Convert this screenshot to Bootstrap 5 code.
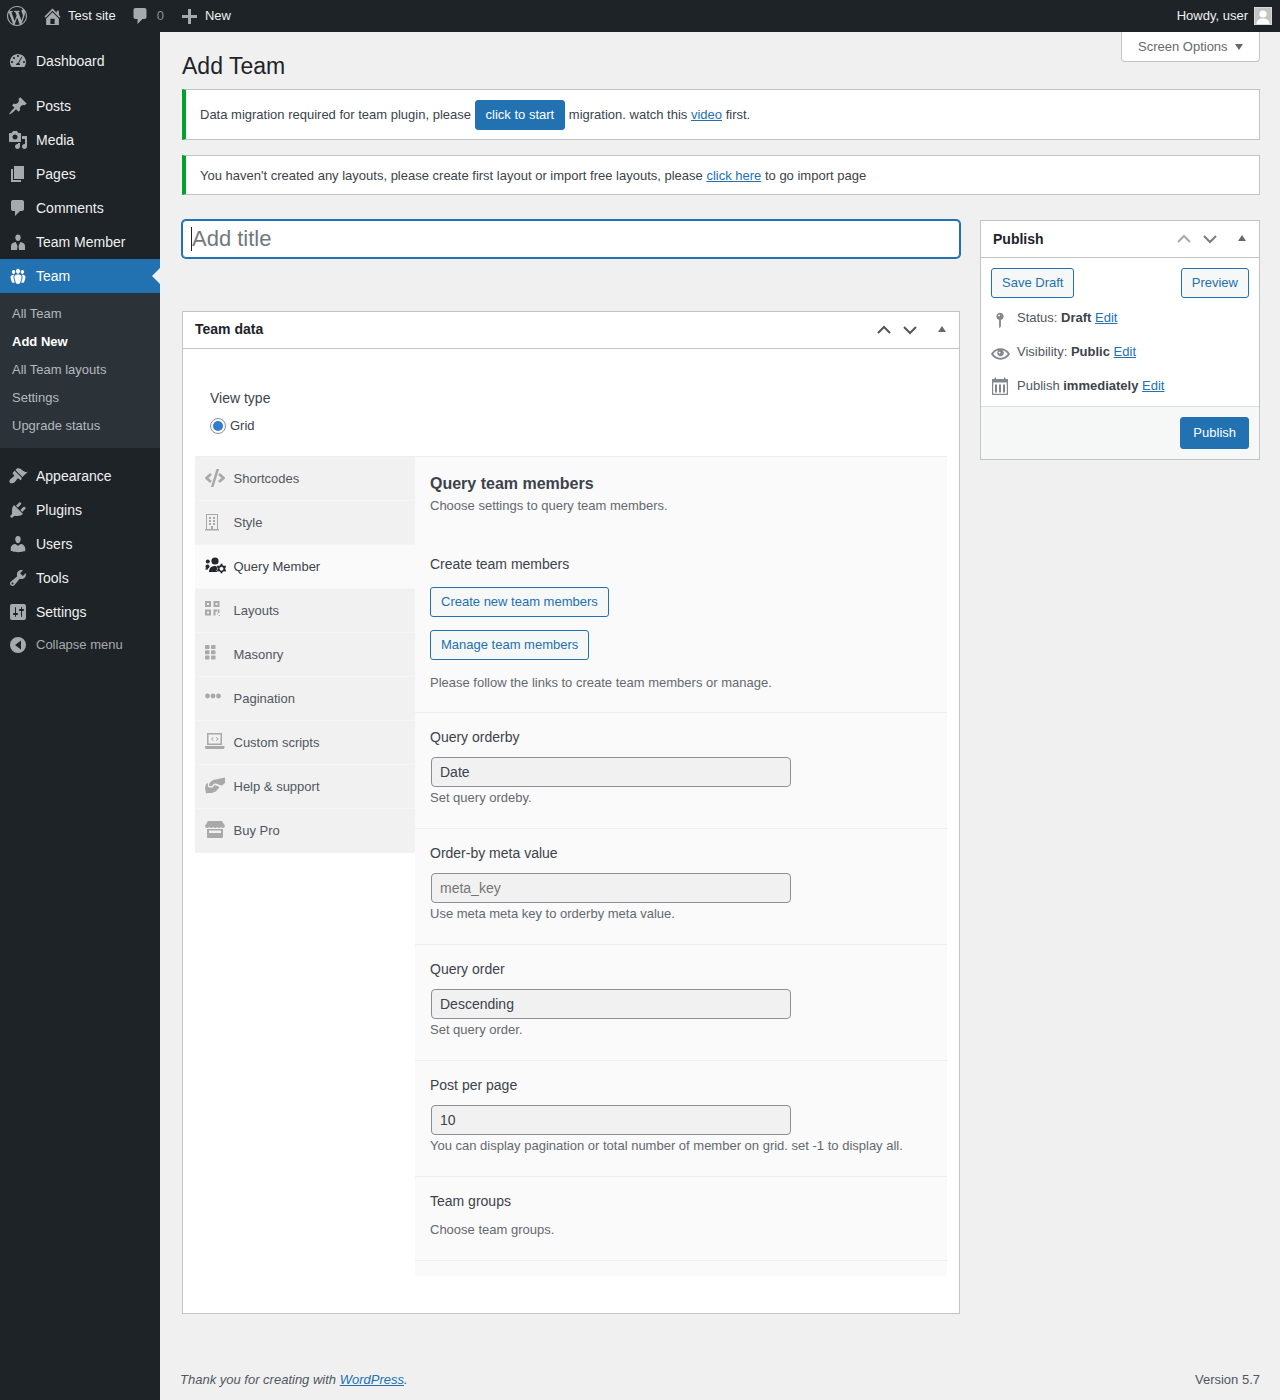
<!DOCTYPE html>
<html lang="en">
<head>
  <meta charset="UTF-8">
  <title>Add Team ‹ Test site — WordPress</title>
  <link href="https://cdn.jsdelivr.net/npm/bootstrap@5.3.0/dist/css/bootstrap.min.css" rel="stylesheet">
  <style>
    body {
      font-family: "Liberation Sans", Arial, sans-serif;
      font-size: 13px;
      line-height: 20px;
      background: #f0f0f1;
      color: #3c434a;
      min-height: 1400px;
    }
    a { color: #2271b1; }

    /* top bar */
    .admin-bar { height: 32px; background: #1d2327; color: #f0f0f1; }
    .bar-item { height: 32px; color: #f0f0f1; text-decoration: none; }
    .bar-item svg { fill: #a7aaad; display: block; }
    .bar-logo { margin: 0 16px 0 7px; width: 21px; }
    .bar-home { gap: 7px; margin-right: 16px; }
    .bar-comments { gap: 9px; margin-right: 18px; }
    .bar-new { gap: 8px; }
    .bar-count { color: #8b9096; }
    .bar-user { gap: 6px; margin-right: 8px; }
    .avatar-box { width: 18px; height: 18px; background: #c4c4c4; border: 1px solid #d8d8d8; overflow: hidden; }

    /* side menu */
    .side-menu { width: 160px; flex: 0 0 160px; background: #1d2327; padding-top: 12px; }
    .menu-row { height: 34px; padding-left: 8px; gap: 8px; color: #f0f0f1; font-size: 14px; text-decoration: none; position: relative; }
    .menu-row svg { width: 20px; height: 20px; fill: #a7aaad; flex: none; }
    .menu-gap { height: 11px; }
    .menu-row.is-current { background: #2271b1; color: #fff; }
    .menu-row.is-current svg { fill: #fff; }
    .menu-row.is-current::after {
      content: "";
      position: absolute;
      right: 0;
      top: 9px;
      border: 8px solid transparent;
      border-right-color: #f0f0f1;
      border-left-width: 0;
    }
    .sub-menu { background: #2c3338; padding: 7px 0 8px; }
    .sub-row { height: 28px; line-height: 28px; padding-left: 12px; color: #b4b9be; text-decoration: none; display: block; }
    .sub-row.is-current { color: #fff; font-weight: 700; }
    .collapse-row { height: 32px; font-size: 13px; color: #a7aaad; }

    /* page */
    .page-wrap { padding: 0 20px 0 22px; min-width: 0; }
    .screen-anchor { height: 0; }
    .screen-tab {
      width: 139px; height: 30px; padding-left: 16px; gap: 7px; background: #fff; color: #646970;
      border: 1px solid #c3c4c7; border-top: 0; border-radius: 0 0 4px 4px;
    }
    .tri-down { border: 4px solid transparent; border-top: 6px solid #646970; border-bottom: 0; width: 0; }
    .page-title { font-size: 23px; font-weight: 400; line-height: 30px; color: #1d2327; padding-top: 19px; margin: 0 0 8px; }

    .wp-notice {
      background: #fff;
      border: 1px solid #c3c4c7;
      border-left: 4px solid #00a32a;
      border-radius: 0;
      margin: 0 0 15px;
      padding: 10px 14px;
      color: #3c434a;
    }
    .notice-tall { height: 51px; }
    .notice-short { height: 40px; }
    .notice-short.wp-notice { margin-bottom: 25px; }

    .wp-btn {
      font-size: 13px;
      line-height: 28px;
      padding: 0 10px;
      border: 1px solid #2271b1;
      border-radius: 3px;
      background: #f6f7f7;
      color: #2271b1;
    }
    .wp-btn:hover { background: #f0f0f1; color: #135e96; border-color: #135e96; }
    .wp-btn-main { background: #2271b1; color: #fff; vertical-align: baseline; }
    .wp-btn-large { line-height: 30px; padding: 0 12px; }

    .main-col { width: 778px; flex: 0 0 778px; }
    .side-col { width: 280px; flex: 0 0 280px; }

    .title-box { height: 38px; margin-bottom: 53px; position: relative; }
    .title-input {
      height: 38px;
      font-size: 22px;
      padding: 0 9px;
      border: 1px solid #2271b1;
      border-radius: 4px;
      box-shadow: 0 0 0 1px #2271b1;
      background: #fff;
      font-family: inherit;
    }
    .title-input::placeholder { color: #73787d; opacity: 1; }
    .title-caret { position: absolute; left: 9px; top: 7px; width: 1px; height: 24px; background: #1d2327; }

    .meta-card { border: 1px solid #c3c4c7; border-radius: 0; background: #fff; }
    .meta-head {
      height: 37px; padding: 0 13px 0 12px; background: #fff; border-bottom: 1px solid #c3c4c7; border-radius: 0;
      font-size: 14px; font-weight: 700; color: #1d2327;
    }
    .head-nudge { padding-bottom: 2px; }
    .head-arrows { gap: 10px; }
    .head-arrows svg { display: block; }
    .tri-up { width: 0; border: 4px solid transparent; border-bottom: 6px solid #646970; border-top: 0; margin-left: 10px; margin-top: -2px; }

    .team-body { padding: 39px 12px 37px; }
    .view-label { font-size: 14px; padding-left: 15px; }
    .view-radio { padding-left: 15px; margin-top: 8px; margin-bottom: 20px; gap: 4px; }
    .radio-dot { width: 16px; height: 16px; border: 1px solid #8c8f94; border-radius: 50%; background: #fff; padding: 2px; }
    .radio-dot span { display: block; width: 10px; height: 10px; border-radius: 50%; background: #2e7fd0; }

    .tab-wrap { border-top: 1px solid #eee; }
    .tab-nav { width: 220px; flex: 0 0 220px; align-self: flex-start; background: #f1f1f1; }
    .tab-row { height: 44px; padding-left: 10px; background: #f1f1f1; color: #50575e; border-bottom: 1px solid #f5f5f5; }
    .tab-row:last-child { border-bottom: 0; }
    .tab-row.is-active { background: #fafafa; color: #3c434a; }
    .tab-ico { width: 28.5px; flex: none; height: 24px; margin-top: -4px; }
    .tab-ico svg { display: block; fill: #a9a9a9; }
    .tab-row.is-active .tab-ico svg { fill: #23282d; }

    .tab-panel { background: #fafafa; padding-bottom: 15px; }
    .panel-intro { padding: 17px 15px 19px; border-bottom: 1px solid #eee; }
    .panel-title { font-size: 16px; font-weight: 700; line-height: 20px; margin: 0 0 2px; color: #3c434a; }
    .panel-sub { color: #646970; }
    .field-label { font-size: 14px; color: #3c434a; }
    .field-row { padding: 14px 15px 20px; border-bottom: 1px solid #eee; }
    .field-note { color: #646970; }
    .intro-gap { margin-top: 38px; }
    .link-btn { display: table; margin-bottom: 13px; }
    .first-link { margin-top: 13px; }
    .field-input {
      width: 360px;
      height: 30px;
      margin: 10px 0 1px 1px;
      padding: 0 8px;
      background: #f1f1f1;
      border: 1px solid #8c8f94;
      border-radius: 4px;
      font-size: 14px;
      color: #3c434a;
      font-family: inherit;
    }
    .field-input::placeholder { color: #757575; opacity: 1; }
    .groups-note { margin-top: 9px; }

    .publish-body { padding: 10px; }
    .pub-row { height: 20px; margin-top: 14px; gap: 7px; color: #50575e; }
    .pub-row:first-child { margin-top: 10px; }
    .pub-row svg { display: block; fill: #82878c; flex: none; }
    .pub-ico { width: 19px; flex: none; }
    .pub-row b { color: #3c434a; }
    .publish-foot { padding: 10px; height: 53px; background: #f6f7f7; border-top: 1px solid #dcdcde; }
    .wp-foot { height: 20px; margin-top: auto; margin-bottom: 10px; padding-left: 20px; margin-left: -22px; color: #50575e; }
  </style>
</head>
<body>
  <div class="admin-bar d-flex align-items-center justify-content-between">
    <div class="d-flex align-items-center">
      <a href="#" class="bar-item bar-logo d-flex align-items-center">
        <svg width="20" height="20" viewBox="0 0 20 20"><path d="M20 10c0-5.51-4.49-10-10-10C4.48 0 0 4.49 0 10c0 5.52 4.48 10 10 10 5.51 0 10-4.48 10-10zM7.78 15.37L4.37 6.22c.55-.02 1.17-.08 1.17-.08.5-.06.44-1.13-.06-1.11 0 0-1.45.11-2.37.11-.18 0-.37 0-.58-.01C4.12 2.69 6.87 1.11 10 1.11c2.33 0 4.45.87 6.05 2.34-.68-.11-1.65.39-1.65 1.58 0 .74.45 1.36.9 2.1.35.61.55 1.36.55 2.46 0 1.49-1.4 5-1.4 5l-3.03-8.37c.54-.02.82-.17.82-.17.5-.05.44-1.25-.06-1.22 0 0-1.44.12-2.38.12-.87 0-2.33-.12-2.33-.12-.5-.03-.56 1.2-.06 1.22l.92.08 1.26 3.41zM17.41 10c.24-.64.74-1.87.43-4.25.7 1.29 1.05 2.71 1.05 4.25 0 3.29-1.73 6.24-4.4 7.78.97-2.59 1.94-5.2 2.92-7.78zM6.1 18.09C3.12 16.65 1.11 13.53 1.11 10c0-1.3.23-2.48.72-3.59C3.25 10.3 4.67 14.2 6.1 18.09zm4.03-6.63l2.58 6.98c-.86.29-1.76.45-2.71.45-.79 0-1.57-.11-2.29-.33.81-2.38 1.62-4.74 2.42-7.1z" fill-rule="evenodd"/></svg>
      </a>
      <a href="#" class="bar-item bar-home d-flex align-items-center">
        <svg width="17" height="17" viewBox="2 2 16 16"><path d="M16 8.5l1.53 1.53-1.06 1.06L10 4.62l-6.47 6.47-1.06-1.06L10 2.5l4 4v-2h2v4zm-6-2.46l6 5.99V18H4v-5.97zM12 17v-5H8v5h4z" fill-rule="evenodd"/></svg>
        Test site
      </a>
      <a href="#" class="bar-item bar-comments d-flex align-items-center">
        <svg width="16" height="18" viewBox="2.5 1 14 18"><path d="M5 2h9c1.100 0 2 .9 2 2v7c0 1.100-.9 2-2 2h-2l-5 5v-5H5c-1.100 0-2-.9-2-2V4c0-1.100.9-2 2-2z"/></svg>
        <span class="bar-count">0</span>
      </a>
      <a href="#" class="bar-item bar-new d-flex align-items-center">
        <svg width="15" height="15" viewBox="0 0 15 15"><path d="M15 6v3H9v6H6V9H0V6h6V0h3v6z"/></svg>
        New
      </a>
    </div>
    <div class="bar-user d-flex align-items-center">
      <span>Howdy, user</span>
      <span class="avatar-box d-block">
        <svg class="d-block" width="16" height="16" viewBox="0 0 16 16"><circle cx="8" cy="6" r="3.600" fill="#fff"/><path d="M1.500 16c0-4 3-5.500 6.500-5.500s6.500 1.500 6.500 5.500z" fill="#fff"/></svg>
      </span>
    </div>
  </div>

  <div class="d-flex" style="min-height:1368px">
    <nav class="side-menu">
      <a href="#" class="menu-row d-flex align-items-center"><svg viewBox="0 0 20 20"><path fill-rule="evenodd" d="M3.76 16h12.48c1.100-1.370 1.760-3.110 1.760-5 0-4.420-3.580-8-8-8s-8 3.580-8 8c0 1.890.660 3.630 1.760 5zM10 4c.55 0 1 .45 1 1s-.45 1-1 1-1-.45-1-1 .45-1 1-1zM6 6c.55 0 1 .45 1 1s-.45 1-1 1-1-.45-1-1 .45-1 1-1zm8.010.410l-3.010 5.600c.6.430 1 1.140 1 1.990H8c0-1.100.9-2 2-2l3.300-5.900c.2-.4.6-.4.710.310zM4 10c.55 0 1 .45 1 1s-.45 1-1 1-1-.45-1-1 .45-1 1-1zm12 0c.55 0 1 .45 1 1s-.45 1-1 1-1-.45-1-1 .45-1 1-1z"/></svg>Dashboard</a>
      <div class="menu-gap"></div>
      <a href="#" class="menu-row d-flex align-items-center"><svg viewBox="0 0 20 20"><path d="M10.440 3.020l1.820-1.820 6.360 6.350-1.830 1.820c-1.050-.68-2.480-.57-3.410.36l-.75.75c-.92.93-1.040 2.350-.35 3.410l-1.830 1.820-2.410-2.410-2.800 2.790c-.42.42-3.380 2.710-3.800 2.290s1.860-3.390 2.280-3.810l2.790-2.790L4.100 9.360l1.830-1.820c1.050.69 2.480.57 3.400-.36l.75-.75c.93-.92 1.050-2.350.36-3.410z"/></svg>Posts</a>
      <a href="#" class="menu-row d-flex align-items-center"><svg viewBox="0 0 20 20"><path fill-rule="evenodd" d="M13 11V4c0-.55-.45-1-1-1h-1.670L9 1H5L3.670 3H2c-.55 0-1 .45-1 1v7c0 .55.45 1 1 1h10c.55 0 1-.45 1-1zM7 4.500c1.380 0 2.500 1.120 2.500 2.500S8.380 9.500 7 9.500 4.500 8.380 4.500 7 5.620 4.500 7 4.500zM14 6h5v10.500c0 1.380-1.120 2.500-2.500 2.500S14 17.880 14 16.500s1.120-2.500 2.500-2.500c.17 0 .34.020.5.050V9h-3V6zm-4 8.050V13h2v3.500c0 1.380-1.120 2.500-2.500 2.500S7 17.880 7 16.500 8.120 14 9.500 14c.17 0 .34.020.5.050z"/></svg>Media</a>
      <a href="#" class="menu-row d-flex align-items-center"><svg viewBox="0 0 20 20"><path d="M6 15V2h10v13H6zm-1 1h8v2H3V5h2v11z"/></svg>Pages</a>
      <a href="#" class="menu-row d-flex align-items-center"><svg viewBox="0 0 20 20"><path d="M5 2h9c1.100 0 2 .9 2 2v7c0 1.100-.9 2-2 2h-2l-5 5v-5H5c-1.100 0-2-.9-2-2V4c0-1.100.9-2 2-2z"/></svg>Comments</a>
      <a href="#" class="menu-row d-flex align-items-center"><svg viewBox="0 0 20 20"><path d="M10 2.500c1.600 0 2.700 1.200 2.700 2.900S11.600 9 10 9 7.300 7.100 7.300 5.400 8.400 2.500 10 2.500zM3 18v-4c0-2.500 2.200-3.700 4.700-4L9.500 14l-.5 4zm14 0v-4c0-2.500-2.200-3.700-4.700-4L10.500 14l.5 4z"/></svg>Team Member</a>
      <a href="#" class="menu-row is-current d-flex align-items-center"><svg viewBox="0 0 20 20"><path d="M8.030 4.460c-.29 1.280.55 3.460 1.970 3.460 1.410 0 2.250-2.180 1.960-3.460-.22-.98-1.080-1.630-1.960-1.630-.89 0-1.740.65-1.970 1.630zm-4.130.9c-.25 1.080.47 2.930 1.670 2.930s1.920-1.850 1.670-2.930c-.19-.83-.92-1.390-1.670-1.390s-1.480.56-1.670 1.390zm8.860 0c-.25 1.080.47 2.930 1.660 2.930 1.200 0 1.920-1.850 1.670-2.930-.19-.83-.92-1.390-1.670-1.390-.74 0-1.470.56-1.660 1.390zm-.59 11.430l1.250-4.300C14.200 10 12.710 8.470 10 8.470c-2.720 0-4.210 1.530-3.440 4.020l1.260 4.300C8.050 17.510 9 18 10 18c.98 0 1.940-.49 2.170-1.210zm-6.100-7.630c-.49.67-.96 1.830-.42 3.590l1.120 3.790c-.34.2-.77.31-1.200.31-.85 0-1.650-.41-1.850-1.030l-1.070-3.650c-.65-2.110.61-3.400 2.920-3.400.27 0 .54.020.79.060-.1.1-.2.22-.29.33zm8.350-.39c2.310 0 3.580 1.290 2.920 3.400l-1.070 3.650c-.2.62-1 1.030-1.850 1.030-.43 0-.86-.11-1.200-.31l1.110-3.770c.55-1.780.08-2.940-.42-3.610-.08-.11-.18-.23-.28-.33.25-.04.51-.06.79-.06z"/></svg>Team</a>
      <div class="sub-menu">
        <a href="#" class="sub-row">All Team</a>
        <a href="#" class="sub-row is-current">Add New</a>
        <a href="#" class="sub-row">All Team layouts</a>
        <a href="#" class="sub-row">Settings</a>
        <a href="#" class="sub-row">Upgrade status</a>
      </div>
      <div class="menu-gap"></div>
      <a href="#" class="menu-row d-flex align-items-center"><svg viewBox="0 0 20 20"><path d="M14.480 11.060L7.410 3.990l1.500-1.500c.5-.56 2.300-.47 3.510.32 1.210.8 1.430 1.280 2.910 2.100 1.180.64 2.450 1.260 4.450.85zm-.71.71L6.700 4.700 4.930 6.470c-.39.39-.39 1.020 0 1.410l1.060 1.060c.39.39.39 1.030 0 1.420-.6.6-1.430 1.110-2.210 1.690-.35.26-.7.53-1.010.84C1.430 13.230.91 15.800 1.910 16.800c.99 1 3.610.52 4.950-.8.31-.31.58-.66.84-1.010.58-.78 1.090-1.610 1.690-2.210.39-.39 1.020-.39 1.410 0l1.060 1.060c.39.39 1.020.39 1.410 0z"/></svg>Appearance</a>
      <a href="#" class="menu-row d-flex align-items-center"><svg viewBox="0 0 20 20"><path d="M13.110 4.360L9.870 7.600 8 5.730l3.240-3.240c.35-.34 1.050-.2 1.560.32.52.51.66 1.210.31 1.550zm-8 1.770l.91-1.120 9.010 9.010-1.190.84c-.71.71-2.630 1.160-3.820 1.160H6.140L4.900 17.260c-.59.59-1.540.59-2.120 0-.59-.58-.59-1.530 0-2.120l1.240-1.240v-3.880c0-1.130.4-3.190 1.090-3.890zm7.260 3.970l3.240-3.240c.34-.35 1.040-.21 1.550.31.52.51.66 1.210.31 1.550l-3.240 3.250z"/></svg>Plugins</a>
      <a href="#" class="menu-row d-flex align-items-center"><svg viewBox="0 0 20 20"><path d="M10 9.250c-2.270 0-2.730-3.440-2.730-3.440C7 4.020 7.820 2 9.970 2c2.160 0 2.980 2.020 2.710 3.810 0 0-.41 3.440-2.680 3.440zm0 2.570L12.720 10c2.390 0 4.520 2.330 4.520 4.530v2.490s-3.650 1.130-7.240 1.130c-3.650 0-7.240-1.130-7.240-1.130v-2.490c0-2.250 1.940-4.480 4.470-4.480z"/></svg>Users</a>
      <a href="#" class="menu-row d-flex align-items-center"><svg viewBox="0 0 20 20"><path fill-rule="evenodd" d="M16.680 9.770c-1.340 1.340-3.300 1.670-4.950.99l-5.410 6.520c-.99.99-2.590.99-3.580 0s-.99-2.59 0-3.570l6.520-5.420c-.68-1.650-.35-3.610.99-4.950 1.280-1.280 3.120-1.620 4.720-1.060l-2.890 2.890 2.820 2.820 2.860-2.870c.53 1.580.18 3.390-1.080 4.650zM3.810 16.210c.4.39 1.040.39 1.430 0 .4-.4.4-1.040 0-1.430-.39-.4-1.030-.4-1.430 0-.39.39-.39 1.030 0 1.430z"/></svg>Tools</a>
      <a href="#" class="menu-row d-flex align-items-center"><svg viewBox="0 0 20 20"><path fill-rule="evenodd" d="M18 16V4c0-1.100-.9-2-2-2H4c-1.100 0-2 .9-2 2v12c0 1.100.9 2 2 2h12c1.100 0 2-.9 2-2zM8 11h1c.55 0 1 .45 1 1s-.45 1-1 1H8v1.500c0 .28-.22.5-.5.5s-.5-.22-.5-.5V13H6c-.55 0-1-.45-1-1s.45-1 1-1h1V5.500c0-.28.22-.5.5-.5s.5.22.5.5V11zm5-2h-1c-.55 0-1-.45-1-1s.45-1 1-1h1V5.500c0-.28.22-.5.5-.5s.5.22.5.5V7h1c.55 0 1 .45 1 1s-.45 1-1 1h-1v5.500c0 .28-.22.5-.5.5s-.5-.22-.5-.5V9z"/></svg>Settings</a>
      <a href="#" class="menu-row collapse-row d-flex align-items-center"><svg viewBox="0 0 20 20"><path fill-rule="evenodd" d="M10 2a8 8 0 1 1 0 16 8 8 0 0 1 0-16zm3 3.500L7 10l6 4.500z"/></svg>Collapse menu</a>
    </nav>

    <div class="page-wrap flex-grow-1 d-flex flex-column">
      <div class="screen-anchor d-flex justify-content-end">
        <div class="screen-tab d-flex align-items-center">Screen Options <span class="tri-down"></span></div>
      </div>
      <h1 class="page-title">Add Team</h1>

      <div class="wp-notice notice-tall">Data migration required for team plugin, please <a href="#" class="btn wp-btn wp-btn-main">click to start</a> migration. watch this <a href="#">video</a> first.</div>
      <div class="wp-notice notice-short">You haven't created any layouts, please create first layout or import free layouts, please <a href="#">click here</a> to go import page</div>

      <div class="d-flex justify-content-between">
        <div class="main-col">
          <div class="title-box">
            <input type="text" class="form-control title-input" placeholder="Add title">
            <span class="title-caret"></span>
          </div>

          <div class="card meta-card">
            <div class="meta-head d-flex align-items-center justify-content-between">
              <span class="head-nudge">Team data</span>
              <div class="head-arrows d-flex align-items-center">
                <svg width="16" height="16" viewBox="0 0 16 16" fill="none" stroke="#50575e" stroke-width="2"><path d="M2 11l6-6 6 6"/></svg>
                <svg width="16" height="16" viewBox="0 0 16 16" fill="none" stroke="#50575e" stroke-width="2"><path d="M2 5l6 6 6-6"/></svg>
                <span class="tri-up"></span>
              </div>
            </div>
            <div class="team-body">
              <div class="view-label">View type</div>
              <div class="view-radio d-flex align-items-center">
                <span class="radio-dot"><span></span></span>
                Grid
              </div>

              <div class="tab-wrap d-flex">
                <div class="tab-nav">
                  <div class="tab-row d-flex align-items-center">
                    <span class="tab-ico"><svg width="20" height="24" viewBox="0 -3 20 24"><path d="M6 6l-4.500 4L6 14M14 6l4.500 4L14 14" fill="none" stroke="#a9a9a9" stroke-width="2.800"/><path d="M11.500 1h2.600L8.500 19H5.900z"/></svg></span>
                    Shortcodes
                  </div>
                  <div class="tab-row d-flex align-items-center">
                    <span class="tab-ico"><svg width="14" height="18" viewBox="0 0 14 18" class="mt-1"><path fill-rule="evenodd" d="M1 1h12v15h1v1.500H0V16h1zm1 1v14h10V2z"/><path d="M4 4h2v2H4zm4 0h2v2H8zM4 7h2v2H4zm4 0h2v2H8zm-4 3h2v2H4zm4 0h2v2H8zM6 13h2v3H6z"/></svg></span>
                    Style
                  </div>
                  <div class="tab-row is-active d-flex align-items-center">
                    <span class="tab-ico"><svg width="21" height="18" viewBox="0 0 21 18" class="mt-1"><circle cx="10" cy="4" r="3.600"/><circle cx="2.800" cy="4.500" r="2"/><circle cx="2.500" cy="9.500" r="2"/><path d="M4 15c0-4 2.500-6 6-6 1 0 2 .2 2.800.6l-.8 5.400zM0 12.500c.5-1.200 1.500-1.600 3-1.500L3 12.500z"/><path fill-rule="evenodd" d="M15.500 6.500h2l.3 1.500 1.300.7 1.400-.5 1 1.700-1.100 1 0 1.300 1.100 1-1 1.700-1.400-.5-1.300.7-.3 1.500h-2l-.3-1.500-1.300-.7-1.400.5-1-1.700 1.100-1v-1.300l-1.100-1 1-1.700 1.400.5 1.300-.7zm1 3.500a1.700 1.700 0 1 0 0 3.400 1.700 1.700 0 0 0 0-3.400z" stroke="#fafafa" stroke-width=".5"/></svg></span>
                    Query Member
                  </div>
                  <div class="tab-row d-flex align-items-center">
                    <span class="tab-ico"><svg width="15" height="15" viewBox="0 0 15 15" class="mt-1"><path fill-rule="evenodd" d="M0 0h6v6H0zm2 2v2h2V2zM8.500 0h6v6h-6zm2 2v2h2V2zM0 8.500h6v6H0zm2 2v2h2v-2z"/><path d="M8.500 8.500h2v6h-2zm2 0h2v2h-2zm2.500 0h1.500v3.500H13zm-1 4h1v1h-1zm2 1.500h1v1h-1z"/></svg></span>
                    Layouts
                  </div>
                  <div class="tab-row d-flex align-items-center">
                    <span class="tab-ico"><svg width="11" height="15" viewBox="0 0 11 15" class="mt-1"><rect width="4.500" height="4" rx=".8"/><rect x="6" width="4.500" height="4" rx=".8"/><rect y="5.300" width="4.500" height="4" rx=".8"/><rect x="6" y="5.300" width="4.500" height="4" rx=".8"/><rect y="10.600" width="4.500" height="4" rx=".8"/><rect x="6" y="10.600" width="4.500" height="4" rx=".8"/></svg></span>
                    Masonry
                  </div>
                  <div class="tab-row d-flex align-items-center">
                    <span class="tab-ico"><svg width="16" height="6" viewBox="0 0 16 6" class="mt-2"><circle cx="2.500" cy="3" r="2.400"/><circle cx="8" cy="3" r="2.400"/><circle cx="13.500" cy="3" r="2.400"/></svg></span>
                    Pagination
                  </div>
                  <div class="tab-row d-flex align-items-center">
                    <span class="tab-ico"><svg width="20" height="17" viewBox="0 0 20 17" class="mt-1"><path fill-rule="evenodd" d="M2 0h15v12H2zm1.500 1.500v9h12v-9z"/><path d="M0 13h19.500v1.500c0 .8-.6 1.500-1.500 1.500H1.500C.6 16 0 15.300 0 14.500z"/><path d="M8 4L6 6l2 2 .6-.6L7.200 6l1.400-1.400zM11.500 4l2 2-2 2-.6-.6L12.300 6l-1.400-1.400z"/></svg></span>
                    Custom scripts
                  </div>
                  <div class="tab-row d-flex align-items-center">
                    <span class="tab-ico"><svg width="20" height="17" viewBox="0 0 20 17" class="mt-1"><path d="M20 .5V6l-3 2.500-2.500-.4L12 6.800 9 6.500 7 9H4l.5-3L8 3l5-1z"/><path d="M0 11l1-4 2-1-.2 3.500L4 10.500h3.800l1.700-2.500 3 1 2 1.300-3.500 4L7 16H3l-2 .5z"/></svg></span>
                    Help &amp; support
                  </div>
                  <div class="tab-row d-flex align-items-center">
                    <span class="tab-ico"><svg width="20" height="17" viewBox="0 0 20 17" class="mt-1"><path d="M3 0h14l2.800 4.500c.3 1.500-.8 2.500-2 2.500-.9 0-1.500-.4-1.900-1-.4.600-1.100 1-1.900 1s-1.500-.4-1.900-1c-.4.600-1.100 1-2 1s-1.600-.4-2-1c-.4.600-1.100 1-1.900 1s-1.500-.4-1.900-1c-.4.600-1 1-1.900 1C.9 7-.2 6 .2 4.500z"/><path fill-rule="evenodd" d="M2 8h16v8a1 1 0 0 1-1 1H3a1 1 0 0 1-1-1zm2 1.500V12h12V9.500z"/></svg></span>
                    Buy Pro
                  </div>
                </div>

                <div class="tab-panel flex-grow-1">
                  <div class="panel-intro">
                    <h2 class="panel-title">Query team members</h2>
                    <div class="panel-sub">Choose settings to query team members.</div>
                    <div class="field-label intro-gap">Create team members</div>
                    <a href="#" class="btn wp-btn link-btn first-link">Create new team members</a>
                    <a href="#" class="btn wp-btn link-btn">Manage team members</a>
                    <div class="field-note">Please follow the links to create team members or manage.</div>
                  </div>
                  <div class="field-row">
                    <div class="field-label">Query orderby</div>
                    <input type="text" class="field-input d-block" value="Date">
                    <div class="field-note">Set query ordeby.</div>
                  </div>
                  <div class="field-row">
                    <div class="field-label">Order-by meta value</div>
                    <input type="text" class="field-input d-block" placeholder="meta_key">
                    <div class="field-note">Use meta meta key to orderby meta value.</div>
                  </div>
                  <div class="field-row">
                    <div class="field-label">Query order</div>
                    <input type="text" class="field-input d-block" value="Descending">
                    <div class="field-note">Set query order.</div>
                  </div>
                  <div class="field-row">
                    <div class="field-label">Post per page</div>
                    <input type="text" class="field-input d-block" value="10">
                    <div class="field-note">You can display pagination or total number of member on grid. set -1 to display all.</div>
                  </div>
                  <div class="field-row">
                    <div class="field-label">Team groups</div>
                    <div class="field-note groups-note">Choose team groups.</div>
                  </div>
                </div>
              </div>
            </div>
          </div>
        </div>

        <div class="side-col">
          <div class="card meta-card">
            <div class="meta-head d-flex align-items-center justify-content-between">
              Publish
              <div class="head-arrows d-flex align-items-center">
                <svg width="16" height="16" viewBox="0 0 16 16" fill="none" stroke="#a7aaad" stroke-width="2"><path d="M2 11l6-6 6 6"/></svg>
                <svg width="16" height="16" viewBox="0 0 16 16" fill="none" stroke="#787c82" stroke-width="2"><path d="M2 5l6 6 6-6"/></svg>
                <span class="tri-up"></span>
              </div>
            </div>
            <div class="publish-body">
              <div class="d-flex justify-content-between">
                <a href="#" class="btn wp-btn">Save Draft</a>
                <a href="#" class="btn wp-btn">Preview</a>
              </div>
              <div>
                <div class="pub-row d-flex align-items-center">
                  <span class="pub-ico"><svg width="18" height="20" viewBox="0 0 20 20" class="mt-1"><path fill-rule="evenodd" d="M14 6c0 1.860-1.280 3.410-3 3.860V17c0 1-2 2-2 2V9.860c-1.720-.45-3-2-3-3.860 0-2.210 1.790-4 4-4s4 1.790 4 4zM8 5c0 .55.45 1 1 1s1-.45 1-1-.45-1-1-1-1 .45-1 1z"/></svg></span>
                  <span>Status: <b>Draft</b> <a href="#">Edit</a></span>
                </div>
                <div class="pub-row d-flex align-items-center">
                  <span class="pub-ico"><svg width="19" height="20" viewBox="0 0 20 20" class="mt-1"><path fill-rule="evenodd" d="M19.700 9.400C17.700 6 14 3.900 10 3.900S2.300 6 .3 9.400L0 10l.3.6c2 3.400 5.700 5.500 9.700 5.500s7.700-2.100 9.700-5.500l.3-.6-.3-.6zM10 14.100c-3.100 0-6-1.600-7.700-4.100C3.600 8 5.700 6.600 8 6.100c-.9.6-1.500 1.700-1.500 2.900 0 1.900 1.600 3.500 3.500 3.500s3.500-1.600 3.500-3.500c0-1.200-.6-2.300-1.500-2.900 2.300.5 4.400 1.900 5.700 3.900-1.700 2.500-4.600 4.100-7.700 4.100zM9 7.500a1 1 0 1 0 0 2 1 1 0 0 0 0-2z"/></svg></span>
                  <span>Visibility: <b>Public</b> <a href="#">Edit</a></span>
                </div>
                <div class="pub-row d-flex align-items-center">
                  <span class="pub-ico"><svg width="18" height="18" viewBox="0 0 18 18"><path fill-rule="evenodd" d="M1 2h2.500V.5h1.500V2h8V.5h1.500V2H17v16H1zm1.200 3.600v11.200h13.600V5.600zM4 7.500h2v8H4zm4 0h2v8H8zm4 0h2v8h-2z"/></svg></span>
                  <span>Publish <b>immediately</b> <a href="#">Edit</a></span>
                </div>
              </div>
            </div>
            <div class="publish-foot d-flex justify-content-end">
              <a href="#" class="btn wp-btn wp-btn-main wp-btn-large">Publish</a>
            </div>
          </div>
        </div>
      </div>

      <div class="wp-foot d-flex justify-content-between">
        <em>Thank you for creating with <a href="#">WordPress</a>.</em>
        <span>Version 5.7</span>
      </div>
    </div>
  </div>
</body>
</html>
